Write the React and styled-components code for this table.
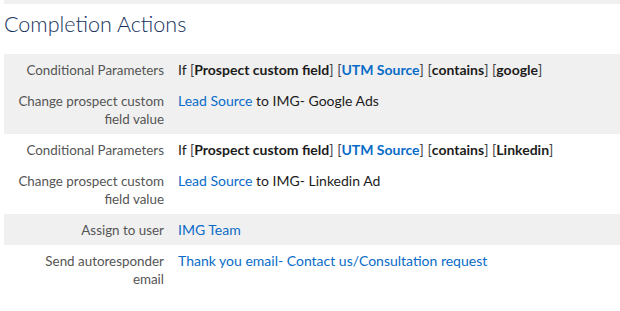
import React from "react";
import styled, { createGlobalStyle } from "styled-components";

const Global = createGlobalStyle`
  html, body { margin: 0; padding: 0; background: #fff; }
  body { font-family: Lato, "Open Sans", sans-serif; }
`;

const Page = styled.div`
  padding-left: 4px;
  width: 616px;
`;

const TopBand = styled.div`
  height: 4px;
  background: #f0f0f0;
`;

const Heading = styled.h2`
  margin: 0;
  padding: 6px 0 0 0;
  height: 44px;
  font-size: 21.5px;
  font-weight: 300;
  color: #16325c;
  line-height: 28px;
`;

const Group = styled.div`
  background: ${(p) => (p.$shade ? "#f0f0f0" : "#fff")};
`;

const Row = styled.div`
  display: grid;
  grid-template-columns: 160px 1fr;
  column-gap: 14px;
  padding: 7px 0 6px;
  line-height: 18px;
`;

const Label = styled.div`
  text-align: right;
  padding-left: 12px;
  font-size: 13.4px;
  color: #555;
`;

const Value = styled.div`
  font-size: 14px;
  color: #1c1c1c;
`;

const B = styled.b`
  font-weight: 700;
`;

const Link = styled.a`
  color: #0a6cc8;
  text-decoration: none;
  font-weight: ${(p) => (p.$bold ? 700 : 400)};
`;

const Br = styled.span`
  color: #444;
`;

const Cond = ({ term }) => (
  <>
    If <Br>[</Br>
    <B>Prospect custom field</B>
    <Br>]</Br> <Br>[</Br>
    <Link $bold>UTM Source</Link>
    <Br>]</Br> <Br>[</Br>
    <B>contains</B>
    <Br>]</Br> <Br>[</Br>
    <B>{term}</B>
    <Br>]</Br>
  </>
);

export default function App() {
  return (
    <>
      <Global />
      <Page>
        <TopBand />
        <Heading>Completion Actions</Heading>
        <Group $shade>
          <Row>
            <Label>Conditional Parameters</Label>
            <Value>
              <Cond term="google" />
            </Value>
          </Row>
          <Row>
            <Label>Change prospect custom field value</Label>
            <Value>
              <Link>Lead Source</Link> to IMG- Google Ads
            </Value>
          </Row>
        </Group>
        <Group>
          <Row>
            <Label>Conditional Parameters</Label>
            <Value>
              <Cond term="Linkedin" />
            </Value>
          </Row>
          <Row>
            <Label>Change prospect custom field value</Label>
            <Value>
              <Link>Lead Source</Link> to IMG- Linkedin Ad
            </Value>
          </Row>
        </Group>
        <Group $shade>
          <Row>
            <Label>Assign to user</Label>
            <Value>
              <Link>IMG Team</Link>
            </Value>
          </Row>
        </Group>
        <Group>
          <Row>
            <Label>Send autoresponder email</Label>
            <Value>
              <Link>Thank you email- Contact us/Consultation request</Link>
            </Value>
          </Row>
        </Group>
      </Page>
    </>
  );
}
